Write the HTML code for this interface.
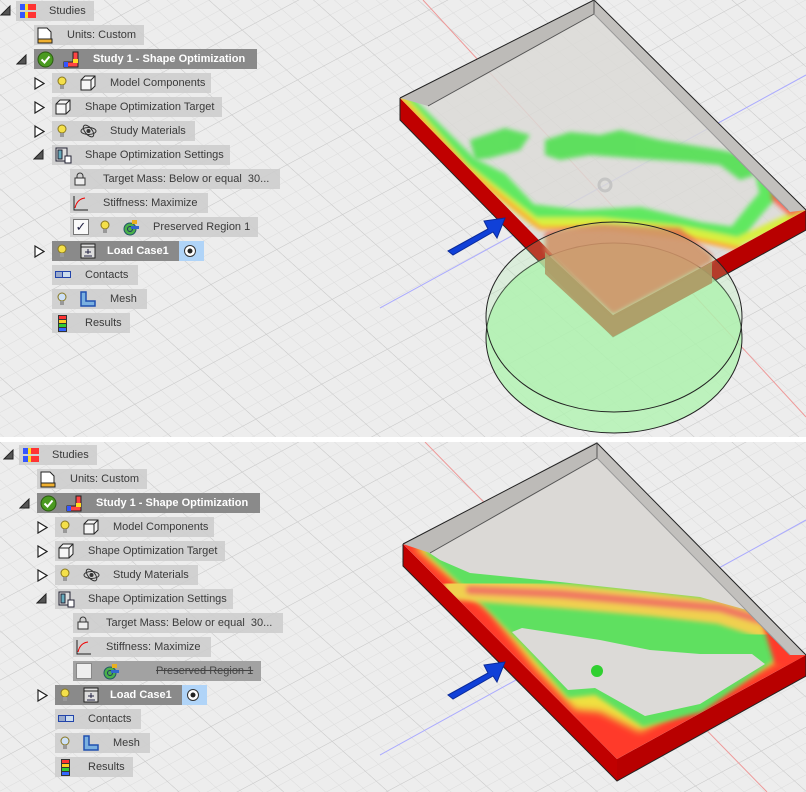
<!DOCTYPE html>
<html><head><meta charset="utf-8"><style>
*{margin:0;padding:0;box-sizing:border-box}
body{width:806px;height:792px;overflow:hidden;background:#ececec;position:relative;font-family:"Liberation Sans",Arial,sans-serif;font-size:11px;color:#3a3a3a}
.panel{position:absolute;left:0;width:806px;overflow:hidden}
.p1{top:0;height:437px}
.p2{top:442px;height:350px}
.div{position:absolute;left:0;top:437px;width:806px;height:5px;background:#fff}
.tree{position:absolute;left:0;top:0}
.r{position:absolute;height:20px;background:rgba(205,205,205,.9);line-height:20px;white-space:nowrap}
.d{background:#8a8a8a;color:#fff;font-weight:bold}
.t{position:absolute}
.ic{position:absolute}
</style></head><body>

<svg width="0" height="0" style="position:absolute"><defs>
<pattern id="g1" width="14" height="14" patternUnits="userSpaceOnUse" patternTransform="rotate(-28)"><line x1="0" y1="0" x2="14" y2="0" stroke="#dcdcdc" stroke-width="1"/></pattern>
<pattern id="g2" width="14" height="14" patternUnits="userSpaceOnUse" patternTransform="rotate(42)"><line x1="0" y1="0" x2="14" y2="0" stroke="#dcdcdc" stroke-width="1"/></pattern>
<pattern id="g3" width="70" height="70" patternUnits="userSpaceOnUse" patternTransform="rotate(-28)"><line x1="0" y1="0" x2="70" y2="0" stroke="#cacaca" stroke-width="1"/></pattern>
<pattern id="g4" width="70" height="70" patternUnits="userSpaceOnUse" patternTransform="rotate(42)"><line x1="0" y1="0" x2="70" y2="0" stroke="#cacaca" stroke-width="1"/></pattern>
<filter id="bl" x="-10%" y="-10%" width="120%" height="120%"><feGaussianBlur stdDeviation="2.5"/></filter>
<filter id="bl2" x="-10%" y="-10%" width="120%" height="120%"><feGaussianBlur stdDeviation="4"/></filter>
<clipPath id="c1"><polygon points="400,98 594,0 806,210 613,316"/></clipPath>
<clipPath id="c2"><polygon points="403,544 597,443 806,655 617,759"/></clipPath>
</defs></svg>

<!-- TOP PANEL -->
<div class="panel p1">
<svg width="806" height="437" style="position:absolute;left:0;top:0">
<rect width="806" height="437" fill="#ededed"/>
<rect width="806" height="437" fill="url(#g1)"/><rect width="806" height="437" fill="url(#g2)"/>
<rect width="806" height="437" fill="url(#g3)"/><rect width="806" height="437" fill="url(#g4)"/>
<line x1="423" y1="0" x2="806" y2="417" stroke="#e99" stroke-width="1"/>
<line x1="380" y1="308" x2="806" y2="75" stroke="#aaf" stroke-width="1"/>
<polygon points="400,98 594,0 806,210 613,316" fill="#dbd9d6" fill-opacity=".85"/>
<polygon points="400,98 613,316 613,337 400,120" fill="#c00000"/>
<polygon points="613,316 806,210 806,230 613,337" fill="#b80000"/>
<g clip-path="url(#c1)">
<g fill="none" stroke-linejoin="round" stroke-linecap="round" filter="url(#bl)">
<path d="M408,104 L470,165 L500,180 L530,212 L580,218 L640,215 L700,230 L735,235 L755,210 L768,195 L760,160" stroke="#60e860" stroke-width="16"/>
<path d="M402,99 L465,168 L535,222 L600,222 L680,230 L738,242 L790,218 L806,212" stroke="#d8f040" stroke-width="9"/>
<path d="M400,98 L470,172 L540,228 L610,228 L690,238 L745,250 L800,218" stroke="#ffa030" stroke-width="4"/>
</g>
<g fill="#58e058" filter="url(#bl)" opacity=".95">
<polygon points="470,140 505,128 530,135 520,150 490,158 475,160"/>
<polygon points="545,140 570,132 600,135 620,130 660,140 690,145 720,150 745,155 755,175 740,180 720,165 690,162 660,160 630,158 590,155 560,160 545,155"/>
</g>
<polygon points="770,180 806,210 790,216 772,200" fill="#ff4a30" opacity=".8" filter="url(#bl)"/>
</g>
<polygon points="400,98 594,0 594,14 428,106" fill="#bdbbb8"/>
<polygon points="594,0 806,210 790,212 594,14" fill="#c2c0bd"/>
<polyline points="400,98 594,0 806,210" fill="none" stroke="#222" stroke-width="1"/>
<polyline points="428,106 594,14 594,0" fill="none" stroke="#555" stroke-width="1"/>
<polyline points="594,14 788,210" fill="none" stroke="#999" stroke-width="1"/>
<polyline points="400,98 400,120 613,337 806,230 806,210" fill="none" stroke="#222"/>
<circle cx="605" cy="185" r="6" fill="none" stroke="#bbb" stroke-width="3" opacity=".7"/>
<ellipse cx="614" cy="338" rx="128" ry="95" fill="#b0f2b0" fill-opacity=".8" stroke="#222"/>
<polygon points="545,232 600,224 680,228 712,255 712,262 613,315 545,252" fill="#e07050" opacity=".85" filter="url(#bl)"/>
<polygon points="545,252 613,315 613,337 545,274" fill="#b08050" opacity=".9"/>
<polygon points="613,315 712,262 712,283 613,337" fill="#b08050" opacity=".9"/>
<ellipse cx="614" cy="317" rx="128" ry="95" fill="#a8f0a8" fill-opacity=".25" stroke="#222"/>
<path d="M448,251 L488,229 L484,221 L505,218 L497,238 L493,232 L453,255 Z" fill="#1040d8" stroke="#0a2a9a"/>
</svg>
</div>

<div class="div"></div>

<!-- BOTTOM PANEL -->
<div class="panel p2">
<svg width="806" height="350" style="position:absolute;left:0;top:0">
<rect width="806" height="350" fill="#ededed"/>
<rect width="806" height="350" fill="url(#g1)"/><rect width="806" height="350" fill="url(#g2)"/>
<rect width="806" height="350" fill="url(#g3)"/><rect width="806" height="350" fill="url(#g4)"/>
<line x1="425" y1="0" x2="767" y2="350" stroke="#e99"/>
<line x1="380" y1="313" x2="806" y2="78" stroke="#aaf"/>
<g transform="translate(0,-442)">
<polygon points="403,544 617,759 617,781 403,566" fill="#c00000"/>
<polygon points="617,759 806,655 806,676 617,781" fill="#b80000"/>
<g clip-path="url(#c2)">
<polygon points="403,544 597,443 806,655 617,759" fill="#ff3a2a"/>
<polygon points="415,548 597,450 800,650 780,660 700,702 640,732 600,712 575,710 535,668 490,612" fill="#f0e040" filter="url(#bl2)"/>
<polygon points="425,552 597,455 792,648 772,662 702,712 643,727 595,695 568,698 522,645 478,600" fill="#5fe060" filter="url(#bl)"/>
<g fill="none" stroke-linecap="round" stroke-linejoin="round" filter="url(#bl)">
<path d="M455,588 L560,596 L650,604 L720,612 L775,630" stroke="#f0d050" stroke-width="24"/>
<path d="M470,590 L560,594 L650,602 L720,608 L760,620" stroke="#f07a60" stroke-width="9"/>
</g>
<polygon points="428,552 597,455 765,615 700,597 560,582 470,573 440,560" fill="#dbd9d6"/>
<polygon points="522,628 600,640 650,650 700,654 752,654 765,664 700,704 645,716 595,688 568,690 512,632" fill="#dcdad7"/>
<polygon points="760,615 806,645 806,670 775,665" fill="#ff3a2a" filter="url(#bl)"/>
</g>
<polygon points="403,544 597,443 597,458 430,553" fill="#bdbbb8"/>
<polygon points="597,443 806,655 790,655 597,458" fill="#c2c0bd"/>
<polyline points="403,544 597,443 806,655" fill="none" stroke="#222"/>
<polyline points="430,553 597,458 597,443" fill="none" stroke="#555"/>
<polyline points="597,458 790,655" fill="none" stroke="#999"/>
<polyline points="403,544 403,566 617,781 806,676 806,655" fill="none" stroke="#222"/>
<circle cx="597" cy="671" r="6" fill="#30d030"/>
<path d="M448,695 L488,673 L484,665 L505,662 L497,682 L493,676 L453,699 Z" fill="#1040d8" stroke="#0a2a9a"/>
</g>
</svg>
</div>

<div id="t1" class="tree" style="left:0;top:0"></div>
<div id="t2" class="tree" style="left:3px;top:444px"></div>

<script>
function bulb(x,y,c){return '<svg class="ic" style="left:'+x+'px;top:'+y+'px" width="10" height="14"><circle cx="5" cy="5" r="4" fill="'+(c||'#f4e04a')+'" stroke="#887720"/><rect x="3" y="9" width="4" height="4" fill="#999"/></svg>';}
function cube(x,y){return '<svg class="ic" style="left:'+x+'px;top:'+y+'px" width="16" height="16"><path d="M1,5 L5,1 L15,1 L15,11 L11,15 L1,15Z M1,5 L11,5 L11,15 M11,5 L15,1" fill="#f6f6f6" stroke="#222"/></svg>';}
function tri(x,y,open){return open?'<svg class="ic" style="left:'+x+'px;top:'+y+'px" width="11" height="11"><path d="M1,10 L10,10 L10,1Z" fill="#555" stroke="#222"/></svg>':'<svg class="ic" style="left:'+x+'px;top:'+y+'px" width="11" height="13"><path d="M1,1 L10,6.5 L1,12Z" fill="#fff" stroke="#222" stroke-width="1.2"/></svg>';}
function row(x,y,w,cls,tx,txt,st){return '<div class="r '+(cls||'')+'" style="left:'+x+'px;top:'+y+'px;width:'+w+'px;'+(st||'')+'"><span class="t" style="left:'+tx+'px">'+txt+'</span></div>';}
function build(id,bottom){
var h='';
h+=tri(0,5,1)+row(16,1,78,'',33,'Studies');
h+='<svg class="ic" style="left:20px;top:3px" width="16" height="16"><rect x="0" y="1" width="16" height="6" fill="#f33"/><rect x="0" y="1" width="5" height="6" fill="#35f"/><rect x="5" y="1" width="3" height="6" fill="#fd2"/><rect x="0" y="9" width="16" height="6" fill="#f33"/><rect x="0" y="9" width="5" height="6" fill="#35f"/><rect x="5" y="9" width="3" height="6" fill="#fd2"/></svg>';
h+=row(34,25,110,'',33,'Units: Custom');
h+='<svg class="ic" style="left:37px;top:27px" width="16" height="17"><path d="M1,1 L10,1 L14,5 L14,12 L1,12Z" fill="#fff" stroke="#222"/><rect x="1" y="12" width="14" height="4" fill="#f0b030" stroke="#222"/></svg>';
h+=tri(16,54,1)+row(34,49,223,'d',59,'Study 1 - Shape Optimization');
h+='<svg class="ic" style="left:37px;top:51px" width="17" height="17"><circle cx="8.5" cy="8.5" r="7.5" fill="#4a9a20" stroke="#2a5a10"/><path d="M4.5,8.5 L7.5,11.5 L12.5,5.5" stroke="#fff" stroke-width="2" fill="none"/></svg>';
h+='<svg class="ic" style="left:63px;top:51px" width="16" height="17"><path d="M10,1 L15,1 L15,16 L1,16 L1,11 L10,11Z" fill="#f44" stroke="#222"/><rect x="1" y="11" width="4" height="5" fill="#35f"/><rect x="10" y="8" width="5" height="4" fill="#fd2"/></svg>';
h+=tri(34,77,0)+row(52,73,159,'',58,'Model Components')+bulb(57,76)+cube(80,75);
h+=tri(34,101,0)+row(52,97,170,'',33,'Shape Optimization Target')+cube(55,99);
h+=tri(34,125,0)+row(52,121,143,'',58,'Study Materials')+bulb(57,124);
h+='<svg class="ic" style="left:80px;top:123px" width="17" height="16"><ellipse cx="8.5" cy="8" rx="7.5" ry="3.5" fill="none" stroke="#333"/><ellipse cx="8.5" cy="8" rx="3.5" ry="7" fill="none" stroke="#333" transform="rotate(-40 8.5 8)"/><circle cx="8.5" cy="8" r="2" fill="#333"/></svg>';
h+=tri(33,149,1)+row(52,145,178,'',33,'Shape Optimization Settings');
h+='<svg class="ic" style="left:55px;top:147px" width="17" height="17"><rect x="1" y="1" width="11" height="13" fill="#ddd" stroke="#223"/><rect x="3" y="3" width="4" height="9" fill="#6ab" stroke="#223"/><rect x="10" y="9" width="6" height="7" fill="#fff" stroke="#223"/></svg>';
h+=row(70,169,210,'',33,'Target Mass: Below or equal&nbsp; 30...');
h+='<svg class="ic" style="left:74px;top:172px" width="12" height="14"><path d="M3,6 V4 a3,3 0 0 1 6,0 V6" fill="none" stroke="#333"/><rect x="1" y="6" width="10" height="7" fill="#eee" stroke="#333"/></svg>';
h+=row(70,193,138,'',33,'Stiffness: Maximize');
h+='<svg class="ic" style="left:73px;top:195px" width="16" height="16"><path d="M1,1 V15 H15" fill="none" stroke="#222"/><path d="M2,13 Q4,4 12,3" fill="none" stroke="#e00"/></svg>';
if(!bottom){
h+=row(70,217,188,'',83,'Preserved Region 1');
h+='<div class="ic" style="left:73px;top:219px;width:16px;height:16px;background:#fafafa;border:1px solid #777;color:#224;font-size:13px;line-height:14px;text-align:center">&#10003;</div>'+bulb(100,220);
h+='<svg class="ic" style="left:123px;top:219px" width="17" height="17"><circle cx="7" cy="10" r="6" fill="#4ab04a" stroke="#256"/><circle cx="7" cy="10" r="2.5" fill="none" stroke="#236"/><rect x="9" y="1" width="5" height="4" fill="#e9b020"/><rect x="8" y="7" width="8" height="3" fill="#36c"/></svg>';
}else{
h+=row(70,217,188,'',83,'<s>Preserved Region 1</s>','background:#a2a2a2;color:#444');
h+='<div class="ic" style="left:73px;top:219px;width:16px;height:16px;background:#eee;border:1px solid #888"></div>';
h+='<svg class="ic" style="left:100px;top:219px" width="17" height="17"><circle cx="7" cy="10" r="6" fill="#4ab04a" stroke="#256"/><circle cx="7" cy="10" r="2.5" fill="none" stroke="#236"/><rect x="9" y="1" width="5" height="4" fill="#e9b020"/><rect x="8" y="7" width="8" height="3" fill="#36c"/></svg>';
}
h+=tri(34,245,0)+row(52,241,127,'d',55,'Load Case1');
h+='<div class="r" style="left:179px;top:241px;width:25px;background:#b0d4f8"></div><svg class="ic" style="left:183px;top:244px" width="14" height="14"><circle cx="7" cy="7" r="5.5" fill="#fff" stroke="#333"/><circle cx="7" cy="7" r="2.5" fill="#222"/></svg>';
h+=bulb(57,244)+'<svg class="ic" style="left:80px;top:243px" width="16" height="16"><rect x="1" y="1" width="14" height="14" fill="#ddd" stroke="#222"/><line x1="1" y1="4" x2="15" y2="4" stroke="#222"/><path d="M8,6 V11 M5,9 H11 M4,13 H12" stroke="#224"/></svg>';
h+=row(52,265,86,'',33,'Contacts')+'<svg class="ic" style="left:55px;top:271px" width="16" height="8"><rect x="0.5" y="0.5" width="7" height="6" fill="#9ac" stroke="#24a"/><rect x="7.5" y="0.5" width="8" height="6" fill="#cde" stroke="#24a"/></svg>';
h+=row(52,289,95,'',58,'Mesh')+bulb(57,292,'#cce0f8')+'<svg class="ic" style="left:80px;top:291px" width="16" height="16"><path d="M1,1 H6 V10 H15 V15 H1Z" fill="#7ab0e0" stroke="#2050b0" stroke-width="1.5"/></svg>';
h+=row(52,313,78,'',33,'Results')+'<svg class="ic" style="left:58px;top:315px" width="9" height="17"><rect x="0.5" y="0.5" width="8" height="4" fill="#f33" stroke="#333"/><rect x="0.5" y="4.5" width="8" height="4" fill="#fc2" stroke="#333"/><rect x="0.5" y="8.5" width="8" height="4" fill="#3c3" stroke="#333"/><rect x="0.5" y="12.5" width="8" height="4" fill="#36f" stroke="#333"/></svg>';
document.getElementById(id).innerHTML=h;}
build('t1',0);build('t2',1);
</script>
</body></html>
